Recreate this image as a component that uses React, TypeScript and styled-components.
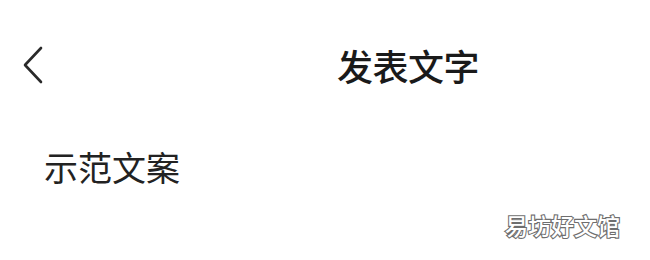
import styled, { createGlobalStyle } from "styled-components";

const GlobalStyle = createGlobalStyle`
  html, body {
    margin: 0;
    padding: 0;
    background: #ffffff;
  }
  body {
    font-family: "Noto Sans CJK SC", "Noto Sans", sans-serif;
    color: #1c1c1c;
  }
`;

export default function App() {
  return (
    <>
      <GlobalStyle />
      <StPage>
        <StHeader>
          <StBackButton aria-label="返回">
            <svg width="22" height="38" viewBox="0 0 22 38" fill="none">
              <path
                d="M19 2 L3 19 L19 36"
                stroke="#2a2a2a"
                strokeWidth="2.6"
                strokeLinecap="round"
                strokeLinejoin="round"
              />
            </svg>
          </StBackButton>
          <StTitle>发表文字</StTitle>
        </StHeader>
        <StSampleText>示范文案</StSampleText>
        <StWatermark>易坊好文馆</StWatermark>
      </StPage>
    </>
  );
}

const StPage = styled.div`
  display: flex;
  flex-direction: column;
  width: 650px;
  height: 260px;
  overflow: hidden;
  background: #ffffff;
`;

const StHeader = styled.div`
  display: flex;
  align-items: center;
  height: 70px;
  margin-top: 30px;
  padding-left: 22px;
`;

const StBackButton = styled.button`
  display: flex;
  align-items: center;
  justify-content: center;
  padding: 0;
  border: none;
  background: none;
`;

const StTitle = styled.h1`
  margin: 0 0 0 293px;
  font-size: 36px;
  font-weight: 500;
  line-height: 1;
  letter-spacing: -0.5px;
  color: #1a1a1a;
`;

const StSampleText = styled.p`
  margin: 50px 0 0 44px;
  font-size: 34px;
  font-weight: 400;
  line-height: 1;
  color: #222222;
`;

const StWatermark = styled.span`
  align-self: flex-end;
  margin: 30px 30px 0 0;
  font-size: 23px;
  font-weight: 500;
  line-height: 1;
  color: #ffffff;
  -webkit-text-stroke: 2.2px #6e6e6e;
  paint-order: stroke fill;
`;
